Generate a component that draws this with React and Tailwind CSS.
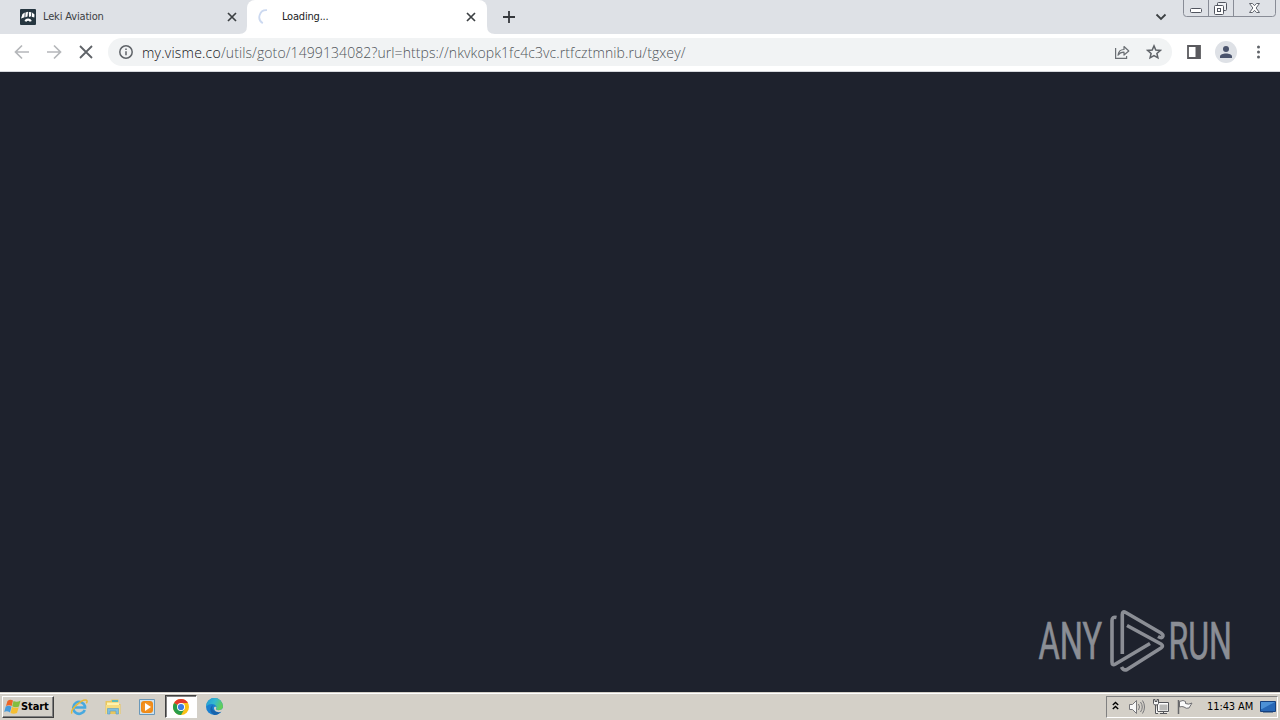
const CloseIcon = () => (
  <svg className="size-3 shrink-0" viewBox="0 0 12 12" fill="none" stroke="#3c4043" strokeWidth="1.7">
    <path d="M2 2l8 8M10 2l-8 8" />
  </svg>
);

const TabStrip = () => (
  <div className="flex h-[34px] shrink-0 bg-[#dee1e6] font-['DejaVu_Sans_Condensed','DejaVu_Sans',sans-serif] text-[11px] text-[#3c4043]">
    <div className="flex h-full w-[239px] items-center rounded-br-lg pl-5 pr-[1px]">
      <svg className="size-4 shrink-0" viewBox="0 0 16 16">
        <rect width="16" height="16" rx="1" fill="#263640" />
        <path d="M1 9.500 2.500 5l2.300-1.500-.3 4.700zM5.500 3.500 8 2.700l-.5 4.800-2.200.7zM8.800 3l2.600.2-.4 4-2 .8zM12.200 3.500l2.300 2-.2 3-2.600-.8z" fill="#fff" />
        <path d="M4.500 12c1-3.300 6-3.300 7.300 0l-2 .8c-.9-1.400-2.500-1.400-3.400 0z" fill="#fff" />
      </svg>
      <span className="ml-[7px] flex-1 whitespace-nowrap pt-px tracking-[-0.16px]">Leki Aviation</span>
      <CloseIcon />
    </div>
    <svg className="h-[34px] w-2 shrink-0" viewBox="0 0 8 34">
      <path d="M0 34q8 0 8-8v8z" fill="#fff" />
    </svg>
    <div className="flex h-full w-[240px] items-center rounded-t-lg bg-white pl-[11px] pr-[10px] text-[#202124]">
      <svg className="size-4 shrink-0" viewBox="0 0 16 16" fill="none" stroke="#ccd9f0" strokeWidth="1.800">
        <path d="M9 1.200A7 7 0 0 0 4.800 14.200" />
      </svg>
      <span className="ml-2 flex-1 pt-px tracking-[-0.2px]">Loading...</span>
      <CloseIcon />
    </div>
    <svg className="h-[34px] w-2 shrink-0" viewBox="0 0 8 34">
      <path d="M8 34q-8 0-8-8v8z" fill="#fff" />
    </svg>
    <svg className="ml-[7px] mt-[10px] size-[14px] shrink-0" viewBox="0 0 14 14" stroke="#35383c" strokeWidth="1.800">
      <path d="M7 1v12M1 7h12" />
    </svg>
    <svg className="ml-auto mr-4 mt-[13px] h-2 w-3 shrink-0" viewBox="0 0 12 8" fill="none" stroke="#3c4043" strokeWidth="1.800">
      <path d="m1.500 1.500 4.500 4.500 4.500-4.500" />
    </svg>
    <svg className="mr-1 h-[18px] w-[93px] shrink-0" viewBox="0 0 93 18" fill="none">
      <path d="M.5 0v13.500q0 3 3 3h86q3 0 3-3V0M25.500 0v16.500M50.500 0v16.500" stroke="#888c96" />
      <rect x="7.500" y="8.500" width="11" height="4" rx="1" fill="#fff" stroke="#51555f" />
      <rect x="34.500" y="2.500" width="9" height="8" rx="1" fill="#eef0f3" stroke="#51555f" />
      <rect x="31.500" y="5.500" width="9" height="9" rx="1" fill="#fff" stroke="#51555f" />
      <rect x="34.500" y="8.500" width="3" height="3" stroke="#51555f" />
      <path d="M66.500 3.500h3l2 2.200 2-2.200h3l-3.400 4.500 3.400 4.500h-3l-2-2.200-2 2.200h-3l3.400-4.500z" fill="#fff" stroke="#60646d" />
    </svg>
  </div>
);

const Toolbar = () => (
  <div className="flex h-[38px] shrink-0 items-center border-b border-[#d5d7dc] bg-white pb-px">
    <svg className="ml-[14px] size-4 shrink-0" viewBox="0 0 16 16" fill="none" stroke="#b5b7ba" strokeWidth="1.700">
      <path d="M15 8H2M8 1.500 1.500 8 8 14.500" />
    </svg>
    <svg className="ml-4 size-4 shrink-0" viewBox="0 0 16 16" fill="none" stroke="#b5b7ba" strokeWidth="1.700">
      <path d="M1 8h13M8 1.500 14.500 8 8 14.500" />
    </svg>
    <svg className="ml-4 size-4 shrink-0" viewBox="0 0 16 16" stroke="#5f6368" strokeWidth="1.800">
      <path d="m2 2 12 12M14 2 2 14" />
    </svg>
    <div className="ml-[14px] flex h-7 w-[1064px] items-center rounded-full bg-[#f1f3f4]">
      <svg className="ml-[11px] size-[14px] shrink-0" viewBox="0 0 14 14" fill="none" stroke="#5f6368" strokeWidth="1.500">
        <circle cx="7" cy="7" r="6.200" />
        <path d="M7 6.300v4M7 3.600v1.500" />
      </svg>
      <div className="ml-[9px] flex-1 whitespace-nowrap font-['Open_Sans','Noto_Sans',sans-serif] text-[14px] font-light tracking-[0.095px] text-[#50555a]">
        <span className="tracking-[0.22px] text-[#101114]">my.visme.co</span>/utils/goto/1499134082?url=https://nkvkopk1fc4c3vc.rtfcztmnib.ru/tgxey/
      </div>
      <svg className="mr-4 h-4 w-4 shrink-0" viewBox="0 0 16 16" fill="none" stroke="#6b6f74" strokeWidth="1.200">
        <path d="M1.600 4v10.300h11V12" />
        <path d="M4 11.200c.5-4 2.800-5.700 6-5.700V2.500L14.800 7 10 11V8.200C7.200 8.200 5.500 9 4 11.200z" strokeLinejoin="round" />
      </svg>
      <svg className="mr-[10px] h-4 w-4 shrink-0" viewBox="0 0 16 16" fill="none" stroke="#5f6368" strokeWidth="1.500">
        <path d="m8 1.900 1.800 4.100 4.500.4-3.400 3 1 4.400L8 11.500l-3.900 2.300 1-4.400-3.400-3 4.500-.4z" />
      </svg>
    </div>
    <svg className="ml-[15px] size-[14px] shrink-0" viewBox="0 0 14 14">
      <path d="M1 1h12v12H1z" fill="none" stroke="#5a5a5e" strokeWidth="1.800" />
      <path d="M8.500 1H13v12H8.500z" fill="#5a5a5e" />
    </svg>
    <svg className="ml-[14px] size-[22px] shrink-0" viewBox="0 0 22 22">
      <circle cx="11" cy="11" r="11" fill="#dee1e6" />
      <circle cx="11" cy="8" r="3" fill="#4a536c" />
      <path d="M5 17v-1.500c0-4 12-4 12 0V17z" fill="#4a536c" />
    </svg>
    <svg className="ml-[19px] h-4 w-4 shrink-0" viewBox="0 0 16 16" fill="#5f6368">
      <circle cx="2.500" cy="3" r="1.500" />
      <circle cx="2.500" cy="8" r="1.500" />
      <circle cx="2.500" cy="13" r="1.500" />
    </svg>
  </div>
);

const Watermark = () => (
  <svg className="h-[64px] w-[194px]" viewBox="0 0 194 64" fill="none">
    <g fill="#8b8e95" stroke="#8b8e95" strokeWidth=".7" fontFamily="'Roboto','Liberation Sans',sans-serif" fontSize="52">
      <text x="1" y="51" textLength="127" lengthAdjust="spacingAndGlyphs" style={{ transform: "scaleX(.5)" }}>ANY</text>
      <text x="261" y="51" textLength="127" lengthAdjust="spacingAndGlyphs" style={{ transform: "scaleX(.5)" }}>RUN</text>
    </g>
    <g stroke="#8b8e95" strokeWidth="3.600" strokeLinejoin="round">
      <path d="M78.500 9.500Q74 8.500 74 12.500V54q0 4 3.500 2L112 35.500" />
      <path d="M84.300 46V6.500q0-4 3.500-2L123 25q3 2 1.500 4-1 1.500-4.500-.5" />
      <path d="M89 17.500 123 36q3 2 0 4L89 61.500q-3.500 1.500-5.500-2.500" />
    </g>
  </svg>
);

const WindowsLogo = () => (
  <svg className="h-4 w-[17px] shrink-0" viewBox="0 0 17 16">
    <path d="M3.500 2Q6 0 9 1.500L7.700 7Q5 5.500 2 7z" fill="#ed6526" />
    <path d="M9.500 2Q13 3.700 16.500 1.500L15 7.500Q11.500 9 8.200 7.300z" fill="#83bd3f" />
    <path d="M1.700 7.500Q5 6 7.500 7.700L6 13.500Q3 11.500.2 13z" fill="#479bdb" />
    <path d="M8 8Q11 9.500 14.700 8.200L13 14Q9.500 15.500 6.500 14z" fill="#f5be32" />
  </svg>
);

const QuickLaunch = () => (
  <div className="ml-4 flex h-6 items-center">
    <svg className="size-[18px]" viewBox="0 0 18 18" fill="none">
      <path d="M14.800 12A6 6 0 1 1 15 8.200v1.300H5" stroke="#48a9df" strokeWidth="2.600" />
      <path d="M2 15.500C-.5 12 12 .5 16.500 2.200c1 .6.500 2-.2 3" stroke="#e8b938" strokeWidth="1.500" />
    </svg>
    <svg className="ml-4 size-[18px]" viewBox="0 0 18 18">
      <path d="M1.500 3h5l1-1.500h7V6h2v10h-15z" fill="#e9c65d" />
      <path d="M3 4.500h12V8H3z" fill="#fff3ae" />
      <path d="M8 2h6v2H8z" fill="#5fbdba" />
      <path d="M2 7h14v9h-3v-4H6v4H2z" fill="#f6dc80" />
      <path d="M3.500 16v-5.500h11V16H12v-3H6v3z" fill="#80bfe0" stroke="#579bc4" strokeWidth=".6" />
    </svg>
    <svg className="ml-4 size-[18px]" viewBox="0 0 18 18">
      <path d="M1.500 1.500h15v15h-15z" fill="#cee2ef" stroke="#6a98b9" />
      <rect x="3" y="3" width="12" height="12" rx="3" fill="#ef8a16" />
      <circle cx="9" cy="9" r="5" fill="#f29224" />
      <path d="m7 5 6 4-6 4z" fill="#fff" />
    </svg>
    <div className="ml-[9px] flex h-[23px] w-8 items-center justify-center border border-b-white border-l-[#404040] border-r-white border-t-[#404040] bg-white shadow-[inset_1px_1px_0_#808080]">
      <svg className="size-4" viewBox="0 0 16 16">
        <circle cx="8" cy="8" r="8" fill="#fbc116" />
        <path d="M8 8 1.070 4A8 8 0 0 1 14.930 4H8z" fill="#e33b2e" />
        <path d="M8 8 1.070 4A8 8 0 0 0 8 16l3.500-6z" fill="#299d4a" />
        <circle cx="8" cy="8" r="4" fill="#fff" />
        <circle cx="8" cy="8" r="3.100" fill="#3d7de4" />
      </svg>
    </div>
    <svg className="ml-[9px] size-[17px]" viewBox="0 0 16 16">
      <defs>
        <linearGradient id="edge" x1="0" y1="0" x2="1" y2=".4">
          <stop offset="0" stopColor="#2199d5" />
          <stop offset=".55" stopColor="#35b9cf" />
          <stop offset="1" stopColor="#62ce5a" />
        </linearGradient>
      </defs>
      <circle cx="8" cy="8" r="8" fill="#1b80d0" />
      <path d="M0 8a8 8 0 0 1 16 0c0 2.500-2 3.500-4 3.500-2.500 0-3-1-2-2.500C10 5.500 4 4 0 8z" fill="url(#edge)" />
      <path d="M7 6.500c-3 3 0 7.500 7.500 6A8 8 0 0 1 8 16C3 14 3 8 7 6.500z" fill="#1763ac" />
      <path d="M9.800 9c-1 2 .2 2.500 2.200 2.500 1.500 0 3-.4 4-2V13h-1.500c-4 1.500-7-1-7-3.500 0-1.500 2.300-1.500 2.300-.5z" fill="#d4d0c8" />
    </svg>
  </div>
);

const Tray = () => (
  <div className="ml-auto mr-[2px] flex h-[22px] w-[172px] items-center border border-b-white border-l-[#808080] border-r-white border-t-[#808080] pl-[5px]">
    <svg className="-mt-[2px] h-[10px] w-[7px]" viewBox="0 0 7 10" fill="none" stroke="#000" strokeWidth="1.400">
      <path d="m.8 4 2.700-2.500L6.200 4M.8 8l2.700-2.500L6.200 8" />
    </svg>
    <svg className="ml-[10px] h-4 w-4" viewBox="0 0 16 16" fill="none" stroke="#77777a">
      <path d="M.5 5.500h3l4-4v13l-4-4h-3z" fill="#f7f7f7" />
      <path d="M9.500 5q2 3 0 6M11.500 3q3.500 5 0 10M13.500 1.500q4 6.500 0 13" />
    </svg>
    <svg className="ml-2 h-4 w-4" viewBox="0 0 16 16" fill="none" stroke="#55565a">
      <path d="M5.500 4.500h10v8h-10z" fill="#b9b9b7" stroke="#fff" strokeWidth="2" />
      <path d="M4.500 3.500h11v9h-11zM7 14.500h7M10.500 12.500v2" />
      <path d="M.5.500v4q0 1.500 2.500 1.500t2.500-1.500v-4h-1.500v2H2v-2zM2.500 6v8.500h2.500" fill="#f7f7f7" />
    </svg>
    <svg className="ml-2 h-4 w-4" viewBox="0 0 16 16">
      <path d="M2.500 2.500q4-2 6 0v2q3 1.500 6.500-.5l-3 5q-3 1-5-1-2-1-4.500 0z" fill="#fafafa" stroke="#707073" />
      <path d="M1.500 1v14" stroke="#66676a" strokeWidth="1.500" />
    </svg>
    <span className="ml-[14px] w-12 whitespace-nowrap pt-px font-['DejaVu_Sans_Condensed','DejaVu_Sans',sans-serif] text-[11px] tracking-[-0.1px] text-black">11:43 AM</span>
    <svg className="ml-[5px] h-[14px] w-4" viewBox="0 0 16 14">
      <path d="M.5 1.500h15v10H.5z" fill="#2868b6" stroke="#16417f" />
      <path d="M1 2h14L2 9H1z" fill="#4d91d6" />
      <path d="M3 12.500h10" stroke="#77899c" />
    </svg>
  </div>
);

const Taskbar = () => (
  <div className="flex h-7 shrink-0 items-center border-t border-[#d4d0c8] bg-[#d4d0c8] shadow-[inset_0_1px_0_#fff]">
    <button className="ml-[2px] mt-px flex h-[22px] w-[52px] items-center border border-b-[#404040] border-l-white border-r-[#404040] border-t-white pl-px font-['DejaVu_Sans_Condensed','DejaVu_Sans',sans-serif] text-[11px] font-bold text-black shadow-[inset_-1px_-1px_0_#808080]">
      <WindowsLogo />
      <span className="pt-px tracking-[-0.1px]">Start</span>
    </button>
    <QuickLaunch />
    <Tray />
  </div>
);

export default function App() {
  return (
    <div className="flex h-screen w-screen flex-col overflow-hidden bg-[#1e222d]">
      <TabStrip />
      <Toolbar />
      <main className="flex min-h-0 flex-1 items-end justify-end pb-[20px] pr-[48px]">
        <Watermark />
      </main>
      <Taskbar />
    </div>
  );
}
